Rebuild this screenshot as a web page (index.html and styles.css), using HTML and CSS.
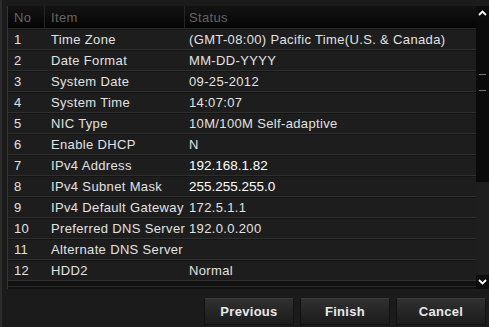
FILE: index.html
```html
<!DOCTYPE html>
<html>
<head>
    <title>Wizard</title>
    <link rel="stylesheet" href="styles.css">
</head>
<body>
    <div class="frame">
        <div class="panel">
            <div class="tabela">
                <div class="linha cabecalho">
                    <span class="c-no">No</span>
                    <span class="c-item">Item</span>
                    <span class="c-status">Status</span>
                </div>
                <div class="linha"><span class="c-no">1</span><span class="c-item">Time Zone</span><span class="c-status">(GMT-08:00) Pacific Time(U.S. &amp; Canada)</span></div>
                <div class="linha"><span class="c-no">2</span><span class="c-item">Date Format</span><span class="c-status">MM-DD-YYYY</span></div>
                <div class="linha"><span class="c-no">3</span><span class="c-item">System Date</span><span class="c-status">09-25-2012</span></div>
                <div class="linha"><span class="c-no">4</span><span class="c-item">System Time</span><span class="c-status">14:07:07</span></div>
                <div class="linha"><span class="c-no">5</span><span class="c-item">NIC Type</span><span class="c-status">10M/100M Self-adaptive</span></div>
                <div class="linha"><span class="c-no">6</span><span class="c-item">Enable DHCP</span><span class="c-status">N</span></div>
                <div class="linha"><span class="c-no">7</span><span class="c-item">IPv4 Address</span><span class="c-status valor">192.168.1.82</span></div>
                <div class="linha"><span class="c-no">8</span><span class="c-item">IPv4 Subnet Mask</span><span class="c-status valor">255.255.255.0</span></div>
                <div class="linha"><span class="c-no">9</span><span class="c-item">IPv4 Default Gateway</span><span class="c-status">172.5.1.1</span></div>
                <div class="linha"><span class="c-no">10</span><span class="c-item">Preferred DNS Server</span><span class="c-status">192.0.0.200</span></div>
                <div class="linha"><span class="c-no">11</span><span class="c-item">Alternate DNS Server</span><span class="c-status"></span></div>
                <div class="linha"><span class="c-no">12</span><span class="c-item">HDD2</span><span class="c-status">Normal</span></div>
                <div class="rodape-tabela"></div>
            </div>
            <div class="rolagem">
                <div class="seta">
                    <svg width="9" height="6" viewBox="0 0 9 6"><path d="M1 5 L4.5 1.5 L8 5" fill="none" stroke="#fff" stroke-width="1.8"/></svg>
                </div>
                <div class="trilho">
                    <div class="polegar">
                        <span class="marca"></span>
                        <span class="marca"></span>
                    </div>
                </div>
                <div class="seta">
                    <svg width="9" height="6" viewBox="0 0 9 6"><path d="M1 1 L4.5 4.5 L8 1" fill="none" stroke="#fff" stroke-width="1.8"/></svg>
                </div>
            </div>
        </div>
        <div class="botoes">
            <button>Previous</button>
            <button>Finish</button>
            <button>Cancel</button>
        </div>
    </div>
</body>
</html>
```

FILE: styles.css
```css
* {
    margin: 0;
    padding: 0;
    box-sizing: border-box;
}

body {
    font-family: "Liberation Sans", Arial, sans-serif;
    background-color: #1b1b1b;
    width: 489px;
    height: 327px;
    overflow: hidden;
}

.frame {
    height: 327px;
    border-left: 2px solid #2c2c2c;
    padding: 6px 0 0 5px;
}

.panel {
    display: flex;
    height: 283px;
}

.tabela {
    width: 469px;
    border-left: 1px solid #333;
    background-color: #111;
}

.linha {
    display: flex;
    height: 21px;
    align-items: center;
    background-color: #1d1d1d;
    border-top: 1px solid #151515;
    border-bottom: 1px solid #2e2e2e;
    color: #e2e2e2;
    font-size: 13px;
    letter-spacing: 0.35px;
    white-space: nowrap;
}

.cabecalho {
    height: 23px;
    background: linear-gradient(#141414, #040404);
    border-top: none;
    border-bottom: 1px solid #2a2a2a;
    color: #656565;
}

.cabecalho span {
    height: 100%;
    display: flex;
    align-items: center;
    border-right: 1px solid #262626;
}

.c-no {
    width: 37px;
    padding-left: 6px;
}

.c-item {
    width: 140px;
    padding-left: 6px;
}

.c-status {
    flex: 1;
    padding-left: 4px;
}

.cabecalho .c-status {
    border-right: none;
}

.valor {
    color: #fff;
    font-size: 13.5px;
    letter-spacing: 0;
}

.rodape-tabela {
    height: 6px;
    border-bottom: 1px solid #2a2a2a;
}

.rolagem {
    width: 13px;
    display: flex;
    flex-direction: column;
    background-color: #181818;
}

.seta {
    height: 14px;
    display: flex;
    justify-content: center;
    align-items: center;
    background-color: #0c0c0c;
}

.trilho {
    flex: 1;
    background-color: #1e1e1e;
}

.polegar {
    height: 162px;
    background-color: #0a0a0a;
    display: flex;
    flex-direction: column;
    align-items: center;
    padding-top: 54px;
    gap: 15px;
}

.marca {
    width: 7px;
    height: 1px;
    background-color: #777;
}

.botoes {
    display: flex;
    justify-content: flex-end;
    gap: 6px;
    margin-top: 9px;
    padding-right: 3px;
}

button {
    width: 90px;
    height: 27px;
    font-family: "Liberation Sans", Arial, sans-serif;
    font-size: 13px;
    font-weight: bold;
    letter-spacing: 0.3px;
    color: #e8e8e8;
    background: linear-gradient(#303030, #1c1c1c);
    border: 1px solid #111;
    border-top-color: #3a3a3a;
    border-radius: 2px;
}
```
